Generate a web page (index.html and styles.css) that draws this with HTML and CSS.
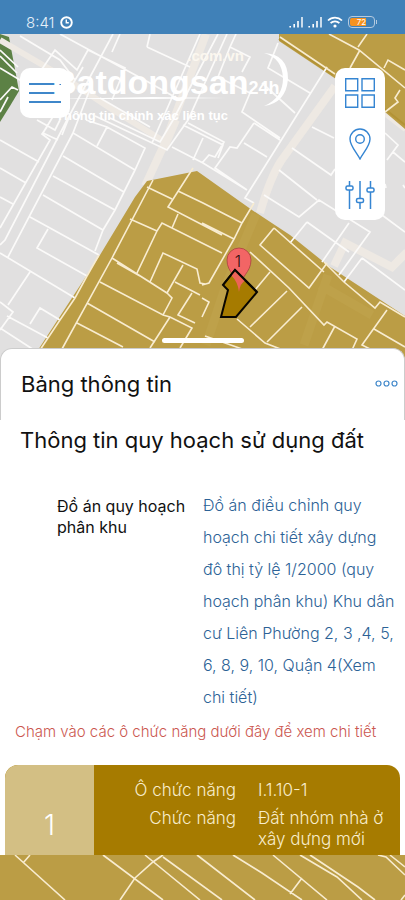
FILE: index.html
```html
<!DOCTYPE html>
<html lang="vi">
<head>
    <meta charset="UTF-8">
    <meta name="viewport" content="width=device-width, initial-scale=1.0">
    <title>Bảng thông tin quy hoạch</title>
    <link rel="stylesheet" href="styles.css">
</head>
<body>

    <!-- Status Bar -->
    <header class="status-bar">
        <div class="status-left">
            <span>8:41</span>
            <svg width="13" height="13" viewBox="0 0 13 13" fill="none" stroke="#fff">
                <circle cx="6.5" cy="6.5" r="5.3" stroke-width="1.9"/>
                <path d="M6.3 3.5v3.3h2.5" stroke-width="1.4"/>
            </svg>
        </div>
        <div class="status-right">
            <svg width="14" height="12" viewBox="0 0 14 12" stroke="#fff" stroke-width="1.6">
                <path d="M1.2 10v1.5M5.2 8v3.5M9 5v6.5"/><path d="M13 1v10.5" opacity=".9"/>
            </svg>
            <svg width="14" height="12" viewBox="0 0 14 12" stroke="#fff" stroke-width="1.6">
                <path d="M1.2 10v1.5M5.2 8v3.5M9 5v6.5"/><path d="M13 1v10.5" opacity=".9"/>
            </svg>
            <svg class="wifi" width="16" height="12" viewBox="0 0 16 12" fill="none" stroke="#fff" stroke-width="1.7">
                <path d="M1 4.5a10 10 0 0 1 14 0M3.6 7.2a6.2 6.2 0 0 1 8.8 0"/>
                <circle cx="8" cy="10" r="1.6" fill="#fff" stroke="none"/>
            </svg>
            <div class="battery"><span>72</span></div>
        </div>
    </header>

    <main class="screen">

        <!-- Planning Map -->
        <svg class="map" viewBox="0 34 405 866" preserveAspectRatio="xMidYMin slice" fill="none" aria-hidden="true">
            <rect y="34" width="405" height="866" fill="#e1e0e0"/>
            <path fill="#5c8145" d="M0 34L9 37L14 64L19 91L10 106L0 122Z"/>
            <g stroke="#eee9e3" stroke-width="8">
                <path d="M0 40L65 78L110 108L165 142" stroke-width="6"/>
                <path d="M206 34L164 145L145 186M176 120L164 148"/>
                <path d="M335 86L281 161Q270 178 260 213"/>
                <path d="M334 266L345 243L392 267L407 252"/>
                <path d="M383 113L405 130" stroke-width="4"/>
            </g>
            <g fill="#bb9d45">
                <path d="M147 181L197 171L252 210L290 235L330 267L405 316V900H0V410L38 350L100 255L135 197Z"/>
                <path d="M279 34H405V129L385 112L333 77L279 41Z"/>
            </g>
            <path stroke="#b39336" stroke-width="2" d="M279 39L333 75M385 109L405 125"/>
            <g stroke="#bea14a" stroke-width="9">
                <path d="M256 214L226 285L206 345M328 275L304 345M320 285L372 315"/>
            </g>
            <!-- parcels on grey ground -->
            <path stroke="#fbfaf9" stroke-width="1.7" d="M37 120L55 130L60 120M47 127L42 134L50 140L0 228M0 140L39 162M0 168L26 183M0 197L13 204M113 34L67 120L5 240L0 245M73 133L8 257M92 84L78 120L73 133L135 170L145 148L107 127L86 120M107 127L97 146M135 170L124 192L63 156M124 192L115 210L53 176M115 210L103 230L43 195M103 230L95 251M30 217L99 255M0 253L75 298M48 229L37 248L87 276M30 272L8 305M60 320L40 308L30 324M0 302L13 312L0 330M7 316L48 338M0 328L34 350
            M95 116L167 150L188 120L227 34M110 118L160 142L173 120L218 34M152 143L200 34M172 147L203 163L247 190M188 123L203 131L224 142L215 157L209 155L202 163M193 160L203 138M183 125L223 145L218 158
            M254 123L280 140M254 123L237 148L230 147L215 168L247 190M244 143L267 157M327 67L245 198L254 203M250 93L242 112L280 138M218 77L250 93M230 47L250 57L242 72M230 47L236 34M278 43L268 68L310 93M262 83L295 113M218 77L230 47
            M314 128L334 138M292 148L331 175L335 169M279 170L317 200M264 195L299 217L319 200L370 232L339 275M307 222L290 243M307 222L349 252M349 223L322 262M362 258L344 282M362 258L405 290M382 215L405 232M385 133L398 145L387 160M393 152L405 162M312 127L334 138M385 184L386 188M403 185L405 188
            M0 50L18 67M0 56L17 73M0 68L40 92M0 100L12 87L18 90M0 112L8 97M60 34L150 83L180 100M147 47L150 34M147 47L190 67M88 50L77 70L55 50L40 72M83 67L43 133L58 140M120 34L112 52M88 50L125 68L112 100M20 36L60 60L75 80M100 98L150 127M70 115L62 135"/>
            <!-- parcels on gold ground -->
            <path stroke="#f8ecd0" stroke-width="1.6" d="M193 168L168 207L222 235M178 191L203 203L242 223M147 187L172 199M153 180L112 258L62 349M130 219L157 231L162 223L222 253M178 214L172 228M202 223L234 239M157 231L137 273M112 258L167 293L183 265M150 282L163 253L197 269L200 283L205 284M100 282L163 315L172 298L167 293M117 263L140 276M87 303L155 342M77 323L123 347M175 282L200 295M192 293L178 315L195 323M163 315L170 317L192 328L180 348M170 317L150 348M99 255L87 276L75 298L60 320L40 350
            M254 203L242 223L234 239L209 283L202 285M202 298L209 302L202 317M274 228L260 245L309 288L327 263M274 228L324 272M250 252L289 288L324 325L327 322L357 339L352 350M270 272L255 290M287 291L250 327M302 307L267 342M237 319L265 343L283 350M335 326L322 350M324 262L344 282L375 308L380 302L405 317M387 310L362 345L372 350M374 329L405 347M205 336L245 350
            M329 34L359 50L405 88M367 34L358 47M360 50L350 68M280 37L335 74M384 68L388 60L405 70M400 90L395 98L398 102L385 112
            M15 855L65 900M30 855L23 863M103 855L163 900M163 855L153 862L135 878L120 900M145 855L200 900M163 857L222 900M197 855L255 900M233 855L262 873L302 900M273 855L327 900M302 878L290 894M300 855L337 877L362 900M310 855L358 887L375 900M378 855L386 857L405 875M390 855L405 867M401 900L405 895"/>
            <!-- marker with the selected parcel -->
            <path fill="#f26565" stroke="#a84340" stroke-width=".8" d="M239 290C238 276 227 273 227 260A12 12 0 0 1 251 260C251 273 240 276 239 290Z"/>
            <path fill="#a67b00" stroke="#090600" stroke-width="2" d="M235 270L257 292L236 317H221L228 290L223 285Z"/>
            <path fill="#ed6357" d="M231 275L235 270L246 280Q240 283 239 292Q238 282 231 275Z"/>
            <path stroke="#090600" stroke-width="2" d="M223 285L235 270L257 292"/>
            <text class="pin-label" x="238" y="267" text-anchor="middle">1</text>
        </svg>

        <!-- Floating Controls -->
        <div class="map-tools">
            <button class="tool menu" aria-label="Menu">
                <svg width="32" height="22" viewBox="0 0 32 22" stroke="#3f87ca" stroke-width="1.8">
                    <path d="M0 2h32M0 11h32M0 20h32"/>
                </svg>
            </button>
            <div class="tool-group">
                <button class="tool" aria-label="Lớp bản đồ">
                    <svg width="30" height="30" viewBox="0 0 30 30" fill="none" stroke="#3585d2" stroke-width="1.4">
                        <path d="M.7.7h12v12H.7zM17 .7h12.3v12H17zM.7 17h12v12.3H.7zM17 17h12.3v12.3H17z"/>
                    </svg>
                </button>
                <button class="tool" aria-label="Vị trí">
                    <svg width="22" height="32" viewBox="0 0 22 32" fill="none" stroke="#3585d2" stroke-width="1.4">
                        <path d="M11 31C8 25 1 18 1 11a10 10 0 0 1 20 0c0 7-7 14-10 20z"/>
                        <circle cx="11" cy="11" r="4.3"/>
                    </svg>
                </button>
                <button class="tool" aria-label="Bộ lọc">
                    <svg width="30" height="30" viewBox="0 0 30 30" fill="none" stroke="#3585d2" stroke-width="1.5">
                        <path d="M4.5 1v5M4.5 10v19M15 1v17.5M15 22.5V29M25.5 1v7M25.5 12v17"/>
                        <rect x="1" y="6" width="7" height="4" rx="1.5"/>
                        <rect x="11.5" y="18.5" width="7" height="4" rx="1.5"/>
                        <rect x="22" y="8" width="7" height="4" rx="1.5"/>
                    </svg>
                </button>
            </div>
        </div>

        <!-- Brand Overlay -->
        <div class="brand">
            <span class="brand-domain">.com.vn</span>
            <span class="brand-name">Batdongsan<span class="brand-24">24h</span></span>
            <span class="brand-slogan">Thông tin chính xác liên tục</span>
            <svg class="brand-swoosh" width="238" height="70" viewBox="0 0 238 70" fill="#fff" aria-hidden="true">
                <path d="M212 5Q236 6 236 31Q234 55 212 58Q231 50 231 30Q230 10 212 5Z"/>
                <path d="M0 51L100 49L175 50L100 51Z"/>
            </svg>
        </div>

        <!-- Information Sheet -->
        <section class="sheet">
            <span class="handle"></span>
            <div class="sheet-header">
                <h1>Bảng thông tin</h1>
                <button class="more" aria-label="Thêm">
                    <svg width="23" height="7" viewBox="0 0 23 7" fill="none" stroke="#3f87ca" stroke-width="1.2">
                        <circle cx="3.5" cy="3.5" r="2.5"/><circle cx="11.5" cy="3.5" r="2.5"/><circle cx="19.5" cy="3.5" r="2.5"/>
                    </svg>
                </button>
            </div>
            <div class="sheet-body">
                <h2>Thông tin quy hoạch sử dụng đất</h2>
                <dl class="plan">
                    <dt>Đồ án quy hoạch phân khu</dt>
                    <dd><a href="#">Đồ án điều chỉnh quy<br>
                        hoạch chi tiết xây dựng<br>
                        đô thị tỷ lệ 1/2000 (quy<br>
                        hoạch phân khu) Khu dân<br>
                        cư Liên Phường 2, 3 ,4, 5,<br>
                        6, 8, 9, 10, Quận 4(Xem<br>
                        chi tiết)</a></dd>
                </dl>
                <p class="hint">Chạm vào các ô chức năng dưới đây để xem chi tiết</p>
                <article class="zone">
                    <div class="zone-number">1</div>
                    <dl class="zone-info">
                        <dt>Ô chức năng</dt>
                        <dd>I.1.10-1</dd>
                        <dt>Chức năng</dt>
                        <dd>Đất nhóm nhà ở xây dựng mới</dd>
                    </dl>
                </article>
            </div>
        </section>
    </main>

</body>
</html>
```
FILE: styles.css
```css
* {
    box-sizing: border-box;
}

body {
    margin: 0;
    height: 100vh;
    display: flex;
    flex-direction: column;
    overflow: hidden;
    font-family: Inter, "Noto Sans", sans-serif;
    color: #111;
}

h1, h2, p, dl, dd {
    margin: 0;
}

button {
    padding: 0;
    border: 0;
    background: none;
    cursor: pointer;
}

svg {
    display: block;
}

/* Status Bar */
.status-bar {
    display: flex;
    flex: none;
    justify-content: space-between;
    align-items: flex-end;
    height: 34px;
    padding: 0 30px 4px 26px;
    background: #4081b8;
    color: #e5f0f8;
}

.status-left,
.status-right {
    display: flex;
    align-items: center;
    gap: 5px;
    height: 16px;
}

.status-left {
    font-size: 15px;
    font-weight: 300;
}

.battery {
    position: relative;
    width: 27px;
    height: 12px;
    border: 1px solid #b5cbe0;
    border-radius: 4px;
    padding: 1px;
    background: linear-gradient(90deg, #f6921e 70%, transparent 70%) content-box;
    color: #fff;
    font-size: 8px;
    line-height: 8px;
    text-align: center;
}

.battery::after {
    content: "";
    position: absolute;
    right: -3px;
    top: 3px;
    width: 1px;
    height: 4px;
    background: #b5cbe0;
}

/* Map */
.screen {
    position: relative;
    display: flex;
    flex: 1;
    flex-direction: column;
    min-height: 0;
    padding-bottom: 45px;
}

.map {
    position: absolute;
    inset: 0;
    width: 100%;
    height: 100%;
}

.pin-label {
    font-size: 16px;
    font-weight: 300;
    fill: #2b1010;
}

/* Floating Controls */
.map-tools {
    position: relative;
    display: flex;
    flex: none;
    justify-content: space-between;
    align-items: flex-start;
    height: 314px;
    padding: 34px 20px 0;
}

.tool {
    display: grid;
    place-items: center;
    width: 50px;
    height: 50px;
}

.menu {
    border-radius: 10px;
    background: #fff;
}

.tool-group {
    display: grid;
    gap: 1px;
    border-radius: 10px;
    background: #fff;
}

/* Brand Overlay */
.brand {
    position: absolute;
    top: 14px;
    left: 52px;
    width: 238px;
    color: #fff;
    font-family: "Liberation Sans", sans-serif;
    font-weight: bold;
    white-space: nowrap;
    pointer-events: none;
}

.brand span {
    display: block;
}

.brand-domain {
    padding-right: 46px;
    font-size: 15px;
    line-height: 16px;
    text-align: right;
    color: #fbf7ef;
}

.brand-name {
    font-size: 34px;
    line-height: 36px;
}

.brand .brand-24 {
    display: inline;
    font-size: 18px;
}

.brand-slogan {
    padding: 2px 0 0 4px;
    font-size: 13px;
    line-height: 16px;
}

.brand-swoosh {
    position: absolute;
    top: 0;
    left: 0;
}

/* Information Sheet */
.sheet {
    position: relative;
    display: flex;
    flex: 1;
    flex-direction: column;
    min-height: 0;
}

.handle {
    position: absolute;
    top: -10px;
    left: 50%;
    width: 82px;
    height: 5px;
    border-radius: 3px;
    background: #fff;
    transform: translateX(-50%);
}

.sheet-header {
    display: flex;
    flex: none;
    justify-content: space-between;
    align-items: center;
    height: 72px;
    padding: 0 6px 2px 20px;
    border: 1px solid #ccc;
    border-bottom: 0;
    border-radius: 12px 12px 0 0;
    background: #fff;
}

h1, h2 {
    font-size: 22px;
    font-weight: 400;
    line-height: 32px;
}

.sheet-body {
    flex: 1;
    min-height: 0;
    padding-top: 4px;
    overflow: hidden;
    background: #fff;
}

h2 {
    padding-left: 20px;
}

/* Plan name */
.plan {
    display: grid;
    grid-template-columns: 134px 1fr;
    column-gap: 12px;
    padding: 33px 0 0 57px;
    font-size: 16px;
}

.plan dt {
    padding-top: 7px;
    line-height: 21px;
}

.plan dd {
    font-weight: 300;
    line-height: 32px;
}

.plan a {
    color: #2c6296;
    text-decoration: none;
}

.hint {
    padding: 3px 0 0 15px;
    color: #cb5750;
    font-size: 15px;
    font-weight: 300;
    line-height: 32px;
}

/* Zone card */
.zone {
    display: flex;
    margin: 17px 5px 0;
    border-radius: 13px;
    overflow: hidden;
    background: #a67b00;
    color: #f8edcd;
    font-weight: 300;
}

.zone-number {
    display: grid;
    place-items: center;
    width: 89px;
    background: #d3bf84;
    color: #fff;
    font-size: 28px;
}

.zone-info {
    display: grid;
    flex: 1;
    grid-template-columns: 142px 1fr;
    gap: 7px 22px;
    padding: 15px 12px 35px 0;
    font-size: 17px;
    line-height: 21px;
}

.zone-info dt {
    text-align: right;
}
```
